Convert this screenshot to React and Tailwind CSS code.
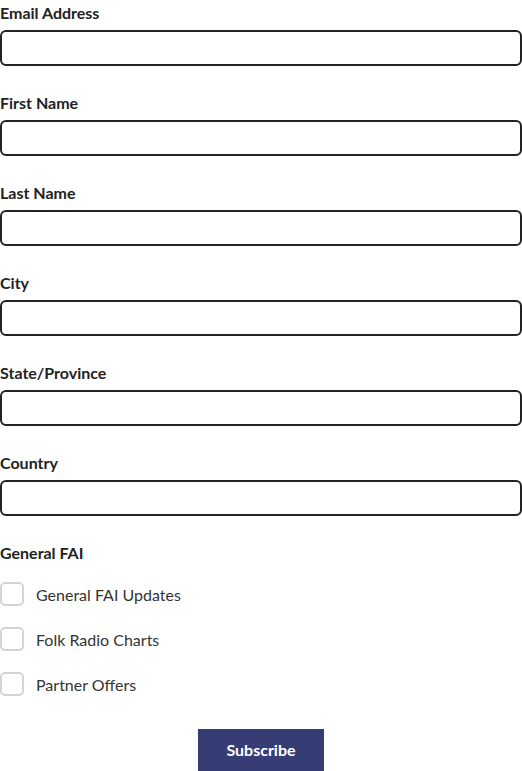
const fields = ["Email Address", "First Name", "Last Name", "City", "State/Province", "Country"];
const options = ["General FAI Updates", "Folk Radio Charts", "Partner Offers"];

export default function App() {
  return (
    <form className="w-[522px] bg-white text-[#222] font-['Lato',_'Liberation_Sans',_sans-serif]">
      {fields.map((f) => (
        <div key={f} className="mb-6">
          <label className="block text-[16px] font-bold leading-[26px] mb-1">{f}</label>
          <input
            type="text"
            className="block w-full h-9 border-2 border-[#222] rounded-[6px] px-3 outline-none"
          />
        </div>
      ))}

      <div className="text-[16px] font-bold leading-[26px] mb-4">General FAI</div>
      <div className="flex flex-col gap-[21px]">
        {options.map((o) => (
          <label key={o} className="flex items-center gap-3 h-6">
            <span className="w-6 h-6 border-2 border-[#d4d4d4] rounded-[5px] shrink-0" />
            <span className="text-[16px] text-[#333] leading-6 pt-[1px]">{o}</span>
          </label>
        ))}
      </div>

      <div className="flex justify-center mt-[33px]">
        <button
          type="button"
          className="w-[126px] h-[42px] bg-[#363c74] text-white text-[16px] font-bold"
        >
          Subscribe
        </button>
      </div>
    </form>
  );
}
